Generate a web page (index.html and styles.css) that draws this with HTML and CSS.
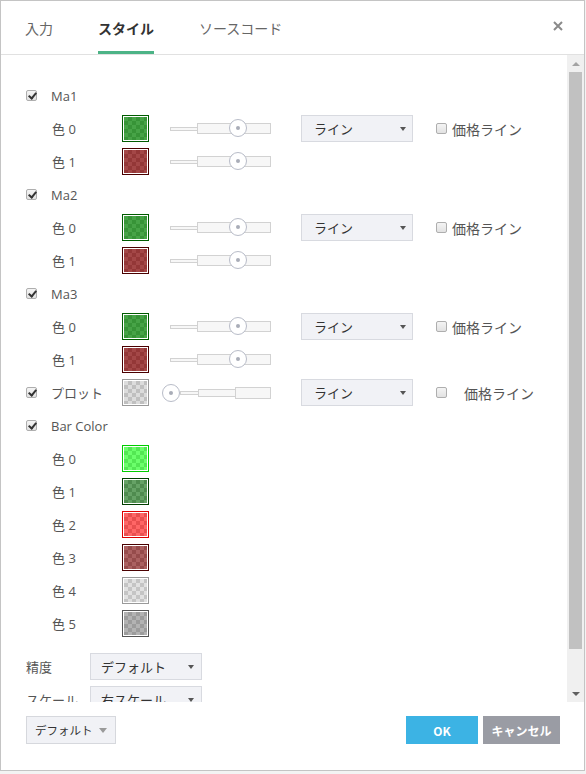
FILE: index.html
```
<!DOCTYPE html>
<html lang="ja">
<head>
<meta charset="utf-8">
<title>スタイル</title>
<link rel="stylesheet" href="styles.css">
</head>
<body>
<div class="dialog">
  <div class="header">
    <div class="tabs">
      <span class="tab">入力</span>
      <span class="tab active">スタイル</span>
      <span class="tab">ソースコード</span>
    </div>
    <svg class="close" width="10" height="10" viewBox="0 0 10 10"><path d="M1 1 L9 9 M9 1 L1 9" stroke="#8a8a8a" stroke-width="2" fill="none"/></svg>
  </div>
  <div class="body">
    <div class="scroll">
      <!-- Ma1 -->
      <div class="row">
        <span class="cb checked"></span><span class="label">Ma1</span>
      </div>
      <div class="row sub">
        <span class="name">色 0</span>
        <span class="swatch sw-g"><span class="fill"></span></span>
        <span class="slider"><span class="seg thin"></span><span class="seg wide"><span class="thumb"></span></span></span>
        <span class="select sel-line"><span>ライン</span><span class="caret"></span></span>
        <span class="cb price"></span><span class="plabel">価格ライン</span>
      </div>
      <div class="row sub">
        <span class="name">色 1</span>
        <span class="swatch sw-r"><span class="fill"></span></span>
        <span class="slider"><span class="seg thin"></span><span class="seg wide"><span class="thumb"></span></span></span>
      </div>
      <!-- Ma2 -->
      <div class="row">
        <span class="cb checked"></span><span class="label">Ma2</span>
      </div>
      <div class="row sub">
        <span class="name">色 0</span>
        <span class="swatch sw-g"><span class="fill"></span></span>
        <span class="slider"><span class="seg thin"></span><span class="seg wide"><span class="thumb"></span></span></span>
        <span class="select sel-line"><span>ライン</span><span class="caret"></span></span>
        <span class="cb price"></span><span class="plabel">価格ライン</span>
      </div>
      <div class="row sub">
        <span class="name">色 1</span>
        <span class="swatch sw-r"><span class="fill"></span></span>
        <span class="slider"><span class="seg thin"></span><span class="seg wide"><span class="thumb"></span></span></span>
      </div>
      <!-- Ma3 -->
      <div class="row">
        <span class="cb checked"></span><span class="label">Ma3</span>
      </div>
      <div class="row sub">
        <span class="name">色 0</span>
        <span class="swatch sw-g"><span class="fill"></span></span>
        <span class="slider"><span class="seg thin"></span><span class="seg wide"><span class="thumb"></span></span></span>
        <span class="select sel-line"><span>ライン</span><span class="caret"></span></span>
        <span class="cb price"></span><span class="plabel">価格ライン</span>
      </div>
      <div class="row sub">
        <span class="name">色 1</span>
        <span class="swatch sw-r"><span class="fill"></span></span>
        <span class="slider"><span class="seg thin"></span><span class="seg wide"><span class="thumb"></span></span></span>
      </div>
      <!-- Plot -->
      <div class="row">
        <span class="cb checked"></span><span class="label plot-label">プロット</span>
        <span class="swatch sw-plot"><span class="fill"></span></span>
        <span class="slider slider-plot"><span class="thumb-left"></span><span class="seg thin short"></span><span class="seg mid"></span><span class="seg tall"></span></span>
        <span class="select sel-line"><span>ライン</span><span class="caret"></span></span>
        <span class="cb price"></span><span class="plabel plabel-wide">価格ライン</span>
      </div>
      <!-- Bar Color -->
      <div class="row">
        <span class="cb checked"></span><span class="label">Bar Color</span>
      </div>
      <div class="row sub"><span class="name">色 0</span><span class="swatch sw-b0"><span class="fill"></span></span></div>
      <div class="row sub"><span class="name">色 1</span><span class="swatch sw-b1"><span class="fill"></span></span></div>
      <div class="row sub"><span class="name">色 2</span><span class="swatch sw-b2"><span class="fill"></span></span></div>
      <div class="row sub"><span class="name">色 3</span><span class="swatch sw-b3"><span class="fill"></span></span></div>
      <div class="row sub"><span class="name">色 4</span><span class="swatch sw-b4"><span class="fill"></span></span></div>
      <div class="row sub"><span class="name">色 5</span><span class="swatch sw-b5"><span class="fill"></span></span></div>
      <!-- settings -->
      <div class="settings">
        <div class="row">
          <span class="slabel">精度</span>
          <span class="select sel-set"><span>デフォルト</span><span class="caret"></span></span>
        </div>
        <div class="row">
          <span class="slabel">スケール</span>
          <span class="select sel-set"><span>右スケール</span><span class="caret"></span></span>
        </div>
      </div>
    </div>
    <div class="scrollbar">
      <div class="sb-btn"><span class="arrow-up"></span></div>
      <div class="sb-thumb"></div>
      <div class="sb-space"></div>
      <div class="sb-btn"><span class="arrow-down"></span></div>
    </div>
  </div>
  <div class="footer">
    <span class="btn-default"><span class="bd-text">デフォルト</span><span class="caret light"></span></span>
    <div class="actions">
      <span class="btn btn-ok">OK</span>
      <span class="btn btn-cancel">キャンセル</span>
    </div>
  </div>
</div>
</body>
</html>
```

FILE: styles.css
```
* { box-sizing: border-box; }
html, body { margin: 0; padding: 0; }
body {
  background: #f3f3f3;
  font-family: "Open Sans", "Noto Sans CJK JP", sans-serif;
  color: #555;
  width: 586px;
  height: 774px;
  overflow: hidden;
}
.dialog {
  width: 585px;
  height: 771px;
  background: #fff;
  border: 1px solid #c4c4c4;
  display: flex;
  flex-direction: column;
}
.header {
  height: 53px;
  flex: 0 0 53px;
  border-bottom: 1px solid #e1e1e1;
  display: flex;
  align-items: stretch;
  padding-left: 24px;
  padding-right: 21px;
  box-sizing: content-box;
}
.tabs {
  display: flex;
  gap: 45px;
}
.tab {
  display: flex;
  align-items: center;
  padding-top: 3px;
  border-bottom: 3px solid transparent;
  font-size: 14px;
  color: #666;
  font-family: "Noto Sans CJK JP", sans-serif;
}
.tab.active {
  color: #333;
  font-weight: bold;
  border-bottom-color: #4cb386;
}
.close {
  margin-left: auto;
  align-self: center;
  margin-top: -3px;
}
.body {
  height: 647px;
  flex: 0 0 647px;
  display: flex;
}
.scroll {
  flex: 1;
  overflow: hidden;
  padding-top: 24px;
  padding-left: 25px;
}
.row {
  display: flex;
  align-items: center;
  height: 33px;
  flex-shrink: 0;
}
.label {
  margin-left: 14px;
  font-size: 13px;
  color: #555;
}
.plot-label {
  width: 71px;
  font-family: "Noto Sans CJK JP", sans-serif;
}
.sub { padding-left: 26px; }
.name {
  width: 70px;
  font-size: 13px;
  color: #555;
  font-family: "Open Sans", "Noto Sans CJK JP", sans-serif;
}
.cb {
  width: 11px;
  height: 11px;
  border: 1px solid #aeaeae;
  border-radius: 2px;
  background: linear-gradient(#f4f4f4, #e2e2e2);
  flex-shrink: 0;
  position: relative;
}
.cb.checked::after {
  content: "";
  position: absolute;
  left: 3px;
  top: 0px;
  width: 3px;
  height: 6px;
  border-right: 2px solid #333;
  border-bottom: 2px solid #333;
  transform: rotate(40deg);
}
.cb.price { margin-left: 23px; }
.plabel {
  margin-left: 5px;
  font-size: 14px;
  color: #555;
  font-family: "Noto Sans CJK JP", sans-serif;
}
.plabel-wide { margin-left: 17px; }
.swatch {
  width: 27px;
  height: 27px;
  border: 1px solid #000;
  padding: 1px;
  background: #fff;
  flex-shrink: 0;
  display: flex;
}
.fill {
  flex: 1;
  background: linear-gradient(var(--c), var(--c)),
    conic-gradient(#c6c6c6 25%, #fff 0 50%, #c6c6c6 0 75%, #fff 0) 0 0 / 8px 8px;
}
.sw-g { border-color: #005c00; --c: rgba(0, 128, 0, 0.72); }
.sw-r { border-color: #4a0000; --c: rgba(128, 0, 0, 0.72); }
.sw-plot { border-color: #9a9a9a; --c: rgba(185, 185, 185, 0.5); }
.sw-b0 { border-color: #00cc00; --c: rgba(0, 255, 0, 0.58); }
.sw-b1 { border-color: #003f00; --c: rgba(0, 100, 0, 0.6); }
.sw-b2 { border-color: #dd0000; --c: rgba(255, 0, 0, 0.6); }
.sw-b3 { border-color: #4a0000; --c: rgba(120, 0, 0, 0.62); }
.sw-b4 { border-color: #9a9a9a; --c: rgba(195, 195, 195, 0.5); }
.sw-b5 { border-color: #555; --c: rgba(128, 128, 128, 0.6); }

.slider {
  margin-left: 21px;
  width: 101px;
  height: 17px;
  display: flex;
  align-items: center;
  flex-shrink: 0;
}
.seg {
  border: 1px solid #d2d2d2;
  background: #f7f7f7;
  position: relative;
}
.seg.thin { width: 27px; height: 4px; border-right: none; }
.seg.wide { width: 74px; height: 11px; }
.thumb, .thumb-left {
  width: 18px;
  height: 18px;
  border: 1px solid #b8bcc8;
  border-radius: 50%;
  background: #fff;
  flex-shrink: 0;
}
.thumb {
  position: absolute;
  left: 31px;
  top: -5px;
}
.thumb::after, .thumb-left::after {
  content: "";
  display: block;
  width: 4px;
  height: 4px;
  border-radius: 50%;
  background: #a9adb8;
  margin: 6px auto 0;
}
.slider-plot {
  margin-left: 13px;
  width: 109px;
}
.slider-plot .thumb-left { position: relative; z-index: 1; }
.seg.short { width: 18px; }
.seg.mid { width: 37px; height: 8px; border-right: none; }
.seg.tall { width: 36px; height: 12px; }

.select {
  height: 27px;
  border: 1px solid #d8dae0;
  background: #f1f2f6;
  display: flex;
  align-items: center;
  justify-content: space-between;
  font-size: 13px;
  color: #333;
  font-family: "Noto Sans CJK JP", sans-serif;
  flex-shrink: 0;
  white-space: nowrap;
}
.sel-line {
  width: 112px;
  margin-left: 30px;
  padding: 0 6px 0 12px;
}
.caret {
  width: 0;
  height: 0;
  border-left: 3.5px solid transparent;
  border-right: 3.5px solid transparent;
  border-top: 4px solid #555;
  flex-shrink: 0;
}
.caret.light { border-top-color: #9a9a9a; border-left-width: 4px; border-right-width: 4px; border-top-width: 5px; }
.settings { margin-top: 10px; }
.slabel {
  width: 64px;
  font-size: 13px;
  color: #555;
  font-family: "Noto Sans CJK JP", sans-serif;
  white-space: nowrap;
}
.sel-set {
  width: 112px;
  padding: 0 7px 0 10px;
}

.scrollbar {
  width: 17px;
  flex: 0 0 17px;
  background: #f0f0f0;
  display: flex;
  flex-direction: column;
}
.sb-btn {
  height: 17px;
  flex: 0 0 17px;
  display: flex;
  align-items: center;
  justify-content: center;
}
.arrow-up {
  width: 0; height: 0;
  border-left: 4px solid transparent;
  border-right: 4px solid transparent;
  border-bottom: 4px solid #a3a3a3;
}
.arrow-down {
  width: 0; height: 0;
  border-left: 4px solid transparent;
  border-right: 4px solid transparent;
  border-top: 4px solid #606060;
}
.sb-thumb {
  height: 577px;
  flex: 0 0 577px;
  margin: 0 2px;
  background: #c1c1c1;
}
.sb-space { flex: 1; }

.footer {
  flex: 1;
  display: flex;
  align-items: flex-start;
  padding: 14px 24px 0 25px;
}
.btn-default {
  width: 90px;
  height: 28px;
  border: 1px solid #d6d8dd;
  background: #f1f2f6;
  display: flex;
  align-items: center;
  gap: 6px;
  padding: 0 8px 0 8px;
  font-size: 11.5px;
  color: #333;
  font-family: "Noto Sans CJK JP", sans-serif;
  white-space: nowrap;
  flex-shrink: 0;
}
.actions {
  margin-left: auto;
  display: flex;
  gap: 5px;
}
.btn {
  height: 28px;
  display: flex;
  align-items: center;
  justify-content: center;
  color: #fff;
  font-weight: bold;
  font-size: 12px;
  font-family: "Noto Sans CJK JP", sans-serif;
}
.btn-ok { width: 72px; background: #3cb3e4; }
.btn-cancel { width: 77px; background: #9a9ca4; }
```
